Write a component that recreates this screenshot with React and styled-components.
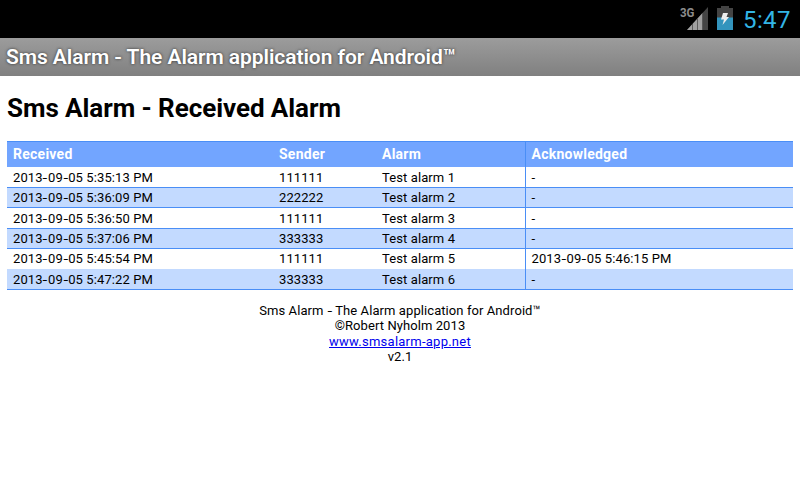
import React from "react";
import styled, { createGlobalStyle } from "styled-components";

const GlobalStyle = createGlobalStyle`
  * { box-sizing: border-box; }
  body { margin: 0; background: #fff; color: #000; font-family: Roboto, "Open Sans", sans-serif; }
`;

const Screen = styled.div`
  width: 800px;
  height: 480px;
  overflow: hidden;
  background: #fff;
`;

const StatusBar = styled.div`
  height: 38px;
  background: #000;
  display: flex;
  justify-content: flex-end;
  align-items: flex-start;
  padding-right: 9px;
`;

const SignalIcon = styled.svg`
  width: 28px;
  height: 30px;
  margin: 2px 9px 0 0;
  overflow: visible;
  text { font: 700 13px "Roboto", sans-serif; }
`;

const BatteryIcon = styled.svg`
  width: 16px;
  height: 24px;
  margin: 6px 10px 0 0;
`;

const Clock = styled.span`
  width: 48px;
  font-size: 24px;
  line-height: 40px;
  color: #33b5e5;
  white-space: nowrap;
  letter-spacing: 0.4px;
`;

const TitleBar = styled.div`
  height: 38px;
  padding-left: 6px;
  background: linear-gradient(#9c9c9c, #808080);
  color: #fff;
  font-size: 21px;
  font-weight: 600;
  line-height: 38px;
  letter-spacing: -0.06px;
  text-shadow: 0 0 3px rgba(0, 0, 0, 0.7);
  white-space: nowrap;
`;

const Content = styled.main`
  padding: 0 7px;
`;

const Heading = styled.h1`
  margin: 0;
  height: 65px;
  font-size: 26px;
  line-height: 64px;
  font-weight: 700;
  letter-spacing: -0.06px;
  white-space: nowrap;
`;

const Hyphen = styled.span`
  display: inline-block;
  transform: scaleX(1.3);
  margin: 0 0.065em;
`;

const Table = styled.div`
  border-top: 1px solid #4a8ef6;
`;

const Row = styled.div`
  display: grid;
  grid-template-columns: 266px 103px 149px 1fr;
  height: ${(p) => p.$height}px;
  line-height: ${(p) => (p.$height === 20 ? 19 : 21)}px;
  background: ${(p) => (p.$alt ? "#c3daff" : "#fff")};
  border-bottom: ${(p) => (p.$line ? "1px solid #4a8ef6" : "none")};
`;

const HeaderRow = styled(Row)`
  background: #72a5ff;
  color: #fff;
`;

const Cell = styled.div`
  padding-left: 6px;
  font-size: 13px;
  letter-spacing: 0.1px;
  white-space: nowrap;
  &:last-child {
    border-left: 1px solid #4a8ef6;
    padding-left: 5.5px;
  }
`;

const HeaderCell = styled(Cell)`
  font-size: 14px;
  font-weight: 700;
  line-height: 25px;
  letter-spacing: 0.25px;
`;

const Footer = styled.footer`
  padding-top: 13px;
  display: flex;
  flex-direction: column;
  align-items: center;
  font-size: 13px;
  letter-spacing: 0.08px;
`;

const FooterLine = styled.div`
  height: ${(p) => p.$height}px;
  line-height: 16px;
  white-space: nowrap;
`;

const Link = styled.a`
  color: #0000ee;
  text-decoration: underline;
  letter-spacing: 0.25px;
`;

const rows = [
  { cells: ["2013-09-05 5:35:13 PM", "111111", "Test alarm 1", "-"], height: 21, line: true },
  { cells: ["2013-09-05 5:36:09 PM", "222222", "Test alarm 2", "-"], height: 20, line: true },
  { cells: ["2013-09-05 5:36:50 PM", "111111", "Test alarm 3", "-"], height: 21, line: true },
  { cells: ["2013-09-05 5:37:06 PM", "333333", "Test alarm 4", "-"], height: 20, line: true },
  { cells: ["2013-09-05 5:45:54 PM", "111111", "Test alarm 5", "2013-09-05 5:46:15 PM"], height: 20, line: false },
  { cells: ["2013-09-05 5:47:22 PM", "333333", "Test alarm 6", "-"], height: 21, line: true },
];

// Draws hyphens slightly wider than the font's own glyph.
function Wide({ children }) {
  return children.split("-").map((part, i) => (
    <React.Fragment key={i}>
      {i > 0 && <Hyphen>-</Hyphen>}
      {part}
    </React.Fragment>
  ));
}

export default function App() {
  return (
    <Screen>
      <GlobalStyle />
      <StatusBar>
        <SignalIcon viewBox="0 -4 28 30">
          <path d="M7 24L28 1V24Z" fill="#444" />
          <path d="M7 24L22.5 7V24Z" fill="#a0a0a0" />
          <path d="M12.5 18V24M17.5 12.5V24M22.5 7V24" stroke="#555" strokeWidth="0.9" />
          <text x="0" y="11" fill="#8c8c8c" textLength="14.5" lengthAdjust="spacingAndGlyphs">3G</text>
        </SignalIcon>
        <BatteryIcon viewBox="0 0 16 24">
          <path d="M4 0H12V2H16V12H0V2H4Z" fill="#444" />
          <path d="M0 11.5H16V24H0Z" fill="#3394bd" />
          <path d="M6 7H11L9.5 11H12L5.5 19L7 13.5H4Z" fill="#eee" />
        </BatteryIcon>
        <Clock>5:47</Clock>
      </StatusBar>
      <TitleBar>Sms Alarm - The Alarm application for Android™</TitleBar>
      <Content>
        <Heading>Sms Alarm - Received Alarm</Heading>
        <Table>
          <HeaderRow $height={25}>
            {["Received", "Sender", "Alarm", "Acknowledged"].map((h) => (
              <HeaderCell key={h}>{h}</HeaderCell>
            ))}
          </HeaderRow>
          {rows.map((r, i) => (
            <Row key={i} $height={r.height} $line={r.line} $alt={i % 2 === 1}>
              {r.cells.map((c, j) => (
                <Cell key={j}>{c === "-" ? c : <Wide>{c}</Wide>}</Cell>
              ))}
            </Row>
          ))}
        </Table>
        <Footer>
          <FooterLine $height={15}><Wide>Sms Alarm - The Alarm application for Android™</Wide></FooterLine>
          <FooterLine $height={16}>©Robert Nyholm 2013</FooterLine>
          <FooterLine $height={15}><Link href="#">www.smsalarm-app.net</Link></FooterLine>
          <FooterLine $height={16}>v2.1</FooterLine>
        </Footer>
      </Content>
    </Screen>
  );
}
